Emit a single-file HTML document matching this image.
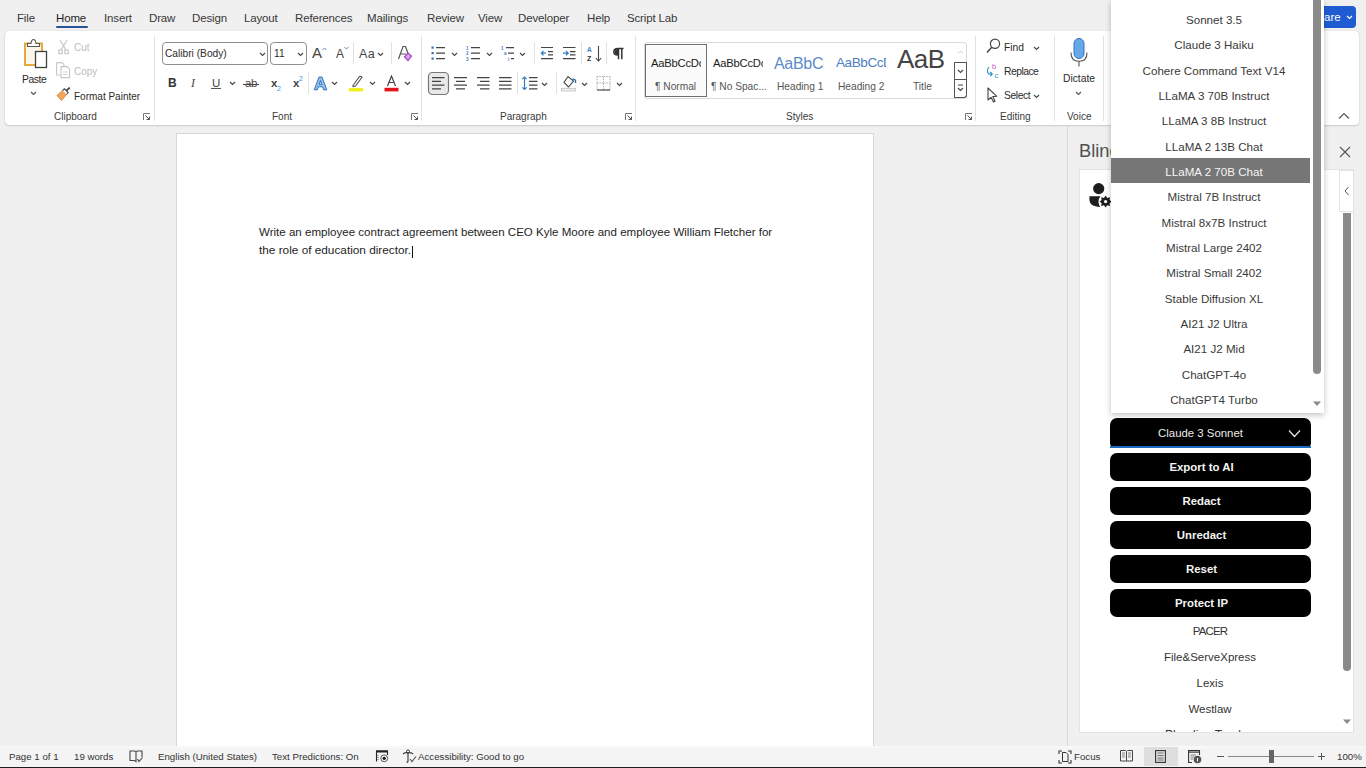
<!DOCTYPE html>
<html><head><meta charset="utf-8">
<style>
*{margin:0;padding:0;box-sizing:border-box}
html,body{width:1366px;height:768px;overflow:hidden;background:#f0f0f0;font-family:"Liberation Sans",sans-serif;color:#262626}
.a{position:absolute;white-space:nowrap}
.tab{position:absolute;top:11px;font-size:11.5px;color:#383838;line-height:14px;letter-spacing:-0.15px}
.rb{font-size:10px;color:#2b2b2b;line-height:12px}
.lbl{position:absolute;top:111px;font-size:10px;color:#3a3a3a;line-height:12px}
.sep{position:absolute;width:1px;background:#e1e1e1}
.dd{position:absolute;left:1111px;width:206px;height:25.33px;text-align:center;font-size:11.6px;line-height:25.33px;color:#3a3a3a;padding-top:1px}
.btn{position:absolute;left:1110px;width:201px;height:28px;background:#000;border-radius:7px;color:#f4f4f4;font-weight:bold;font-size:11.4px;text-align:center;line-height:28px;padding-right:18px}
.pl{position:absolute;left:1110px;width:200px;text-align:center;font-size:11.5px;color:#333;line-height:14px}
.st{position:absolute;top:751px;font-size:9.7px;color:#333;line-height:12px}
</style></head><body>

<!-- menu tabs -->
<div class="tab" style="left:17px">File</div>
<div class="tab" style="left:56px;color:#1f1f1f">Home</div>
<div class="a" style="left:56px;top:26px;width:32px;height:2px;background:#2a5298;border-radius:1px"></div>
<div class="tab" style="left:104px">Insert</div>
<div class="tab" style="left:149px">Draw</div>
<div class="tab" style="left:192px">Design</div>
<div class="tab" style="left:244px">Layout</div>
<div class="tab" style="left:295px">References</div>
<div class="tab" style="left:367px">Mailings</div>
<div class="tab" style="left:427px">Review</div>
<div class="tab" style="left:478px">View</div>
<div class="tab" style="left:518px">Developer</div>
<div class="tab" style="left:587px">Help</div>
<div class="tab" style="left:627px">Script Lab</div>

<!-- share button -->
<div class="a" style="left:1290px;top:6px;width:66px;height:22px;background:#1f5bd1;border-radius:4px"></div><div class="a" style="left:1310px;top:10px;font-size:11.5px;line-height:14px;color:#fff">Share</div><svg class="a" style="left:1346px;top:15px" width="7" height="5" viewBox="0 0 7 5"><path d="M1 1 L3.5 3.5 L6 1" fill="none" stroke="#fff" stroke-width="1.2"/></svg>

<!-- ribbon card -->
<div class="a" style="left:5px;top:31px;width:1354px;height:94px;background:#fff;border-radius:4px;box-shadow:0 0 1px rgba(0,0,0,0.22),0 1px 2px rgba(0,0,0,0.14)"></div>


<!-- ===== RIBBON CONTENT ===== -->
<!-- Clipboard -->
<svg class="a" style="left:23px;top:38px" width="26" height="31" viewBox="0 0 26 31">
 <rect x="2" y="5.5" width="17" height="21.5" fill="#fdf6ea" stroke="#e9a83b" stroke-width="2"/>
 <path d="M4.5 8.5 L4.5 5.5 L8 5.5 Q8.5 1.5 10.5 1.5 Q12.5 1.5 13 5.5 L16.5 5.5 L16.5 8.5 Z" fill="#fff" stroke="#555" stroke-width="1.1"/>
 <rect x="12.5" y="13.5" width="11" height="16" fill="#fff" stroke="#404040" stroke-width="1.3"/>
</svg>
<div class="a rb" style="left:22px;top:74px;font-size:10.3px;letter-spacing:-0.4px">Paste</div>
<svg class="a" style="left:30px;top:91px" width="7" height="5" viewBox="0 0 7 5"><path d="M1 1 L3.5 3.5 L6 1" fill="none" stroke="#555" stroke-width="1.1"/></svg>

<svg class="a" style="left:58px;top:39px" width="11" height="16" viewBox="0 0 11 16">
 <path d="M2 1 L8 11 M9 1 L3 11" stroke="#c4c4c4" stroke-width="1.1" fill="none"/>
 <rect x="0.8" y="11" width="3.4" height="3.6" fill="none" stroke="#c4c4c4" stroke-width="1.1"/>
 <rect x="6.8" y="11" width="3.4" height="3.6" fill="none" stroke="#c4c4c4" stroke-width="1.1"/>
</svg>
<div class="a rb" style="left:74px;top:42px;color:#bdbdbd">Cut</div>
<svg class="a" style="left:56px;top:62px" width="15" height="17" viewBox="0 0 15 17">
 <path d="M0.6 0.6 H6 L8 2.6 V4 M0.6 0.6 V13 H4.5" fill="none" stroke="#c6c6c6" stroke-width="1.1"/>
 <path d="M5 4.6 H11 L13.6 7.2 V15.6 H5 Z" fill="none" stroke="#c6c6c6" stroke-width="1.1"/>
 <path d="M7 10 H11.5 M7 12.5 H11.5" stroke="#d0d0d0" stroke-width="1"/>
</svg>
<div class="a rb" style="left:74px;top:66px;color:#bdbdbd">Copy</div>
<svg class="a" style="left:56px;top:87px" width="15" height="15" viewBox="0 0 15 15">
 <path d="M1 8.5 L6.5 3.5 L10.5 7.5 L5.5 13.5 Z" fill="#f2a65a" stroke="#d9782a" stroke-width="0.8"/>
 <path d="M6.5 3.5 L8.5 1.8 L12.2 5.5 L10.5 7.5" fill="#fff" stroke="#444" stroke-width="1.1"/>
 <path d="M10.4 3.6 L13.8 0.6" stroke="#444" stroke-width="1.8"/>
</svg>
<div class="a rb" style="left:74px;top:91px">Format Painter</div>
<div class="lbl" style="left:54px">Clipboard</div>
<svg class="a" style="left:143px;top:113px" width="8" height="8" viewBox="0 0 8 8"><path d="M0.5 7 V0.5 H7" fill="none" stroke="#777" stroke-width="1"/><path d="M2.5 2.5 L6.5 6.5 M3.5 6.5 H6.5 V3.5" fill="none" stroke="#555" stroke-width="1"/></svg>
<div class="sep" style="left:154px;top:36px;height:85px"></div>

<!-- Font -->
<div class="a" style="left:162px;top:42px;width:106px;height:23px;border:1px solid #8f8f8f;border-radius:4px"></div>
<div class="a rb" style="left:165px;top:48px;font-size:10.2px">Calibri (Body)</div>
<svg class="a" style="left:259px;top:52px" width="7" height="5" viewBox="0 0 7 5"><path d="M1 1 L3.5 3.5 L6 1" fill="none" stroke="#444" stroke-width="1.1"/></svg>
<div class="a" style="left:270px;top:42px;width:37px;height:23px;border:1px solid #8f8f8f;border-radius:4px"></div>
<div class="a rb" style="left:274px;top:48px;font-size:10.2px">11</div>
<svg class="a" style="left:297px;top:52px" width="7" height="5" viewBox="0 0 7 5"><path d="M1 1 L3.5 3.5 L6 1" fill="none" stroke="#444" stroke-width="1.1"/></svg>
<div class="a" style="left:312px;top:45px;font-size:15px;color:#444;line-height:16px">A</div>
<svg class="a" style="left:322px;top:47px" width="5" height="4" viewBox="0 0 5 4"><path d="M0.5 3 L2.5 1 L4.5 3" fill="none" stroke="#5a8ac0" stroke-width="1"/></svg>
<div class="a" style="left:336px;top:48px;font-size:12px;color:#444;line-height:13px">A</div>
<svg class="a" style="left:344px;top:46px" width="5" height="4" viewBox="0 0 5 4"><path d="M0.5 1 L2.5 3 L4.5 1" fill="none" stroke="#5a8ac0" stroke-width="1"/></svg>
<div class="sep" style="left:353px;top:42px;height:22px"></div>
<div class="a" style="left:359px;top:48px;font-size:12.5px;color:#444;line-height:13px;letter-spacing:0.3px">Aa</div>
<svg class="a" style="left:377px;top:52px" width="7" height="5" viewBox="0 0 7 5"><path d="M1 1 L3.5 3.5 L6 1" fill="none" stroke="#444" stroke-width="1.1"/></svg>
<div class="sep" style="left:391px;top:42px;height:22px"></div>
<svg class="a" style="left:397px;top:45px" width="16" height="17" viewBox="0 0 16 17">
 <path d="M1.5 14 L6 1.5 L8.5 1.5 L11 8.5 M4 9 H9" fill="none" stroke="#555" stroke-width="1.2"/>
 <path d="M7.5 12 L11 8 L14.5 11 L11 15.5 Z" fill="#d9a7e8" stroke="#a346c7" stroke-width="1.2"/>
</svg>

<div class="a" style="left:168px;top:77px;font-size:12px;font-weight:bold;color:#333;line-height:13px">B</div>
<div class="a" style="left:191px;top:77px;font-size:12px;font-style:italic;color:#444;line-height:13px;font-family:'Liberation Serif',serif">I</div>
<div class="a" style="left:212px;top:77px;font-size:11.5px;color:#444;line-height:13px">U</div>
<div class="a" style="left:211px;top:88px;width:10px;height:1px;background:#555"></div>
<svg class="a" style="left:229px;top:81px" width="7" height="5" viewBox="0 0 7 5"><path d="M1 1 L3.5 3.5 L6 1" fill="none" stroke="#444" stroke-width="1.1"/></svg>
<div class="a" style="left:245px;top:77px;font-size:11.5px;color:#444;line-height:13px;letter-spacing:-0.5px">ab</div>
<div class="a" style="left:243px;top:84px;width:16px;height:1px;background:#444"></div>
<div class="a" style="left:271px;top:77px;font-size:11.5px;font-weight:bold;color:#444;line-height:13px">x</div>
<div class="a" style="left:277px;top:85px;font-size:7px;color:#4d8bd0;line-height:8px">2</div>
<div class="a" style="left:293px;top:77px;font-size:11.5px;font-weight:bold;color:#444;line-height:13px">x</div>
<div class="a" style="left:299px;top:75px;font-size:7px;color:#4d8bd0;line-height:8px">2</div>
<div class="sep" style="left:308px;top:72px;height:22px"></div>
<svg class="a" style="left:313px;top:76px" width="15" height="15" viewBox="0 0 15 15">
 <path d="M1.2 13.8 L6 1 L9 1 L13.8 13.8 H10.6 L9.6 10.8 H5.4 L4.4 13.8 Z M6.3 8.3 H8.7 L7.5 4.6 Z" fill="#8cc0ee" stroke="#2a68b0" stroke-width="0.9" fill-rule="evenodd"/>
</svg>
<svg class="a" style="left:331px;top:81px" width="7" height="5" viewBox="0 0 7 5"><path d="M1 1 L3.5 3.5 L6 1" fill="none" stroke="#444" stroke-width="1.1"/></svg>
<svg class="a" style="left:348px;top:75px" width="16" height="17" viewBox="0 0 16 17">
 <path d="M5 10.5 L11.5 1.5 Q13 1 14 2.3 L7.5 11 L5 11.5 Z" fill="#fff" stroke="#555" stroke-width="1.1"/>
 <rect x="1" y="13" width="14" height="3.5" fill="#f0ef1e"/>
</svg>
<svg class="a" style="left:369px;top:81px" width="7" height="5" viewBox="0 0 7 5"><path d="M1 1 L3.5 3.5 L6 1" fill="none" stroke="#444" stroke-width="1.1"/></svg>
<svg class="a" style="left:384px;top:75px" width="15" height="17" viewBox="0 0 15 17">
 <path d="M3.5 11 L7.5 1 L11.5 11 M5 7.5 H10" fill="none" stroke="#444" stroke-width="1.2"/>
 <rect x="0.5" y="12.8" width="14" height="3.6" fill="#e3131a"/>
</svg>
<svg class="a" style="left:404px;top:81px" width="7" height="5" viewBox="0 0 7 5"><path d="M1 1 L3.5 3.5 L6 1" fill="none" stroke="#444" stroke-width="1.1"/></svg>
<div class="lbl" style="left:272px">Font</div>
<svg class="a" style="left:411px;top:113px" width="8" height="8" viewBox="0 0 8 8"><path d="M0.5 7 V0.5 H7" fill="none" stroke="#777" stroke-width="1"/><path d="M2.5 2.5 L6.5 6.5 M3.5 6.5 H6.5 V3.5" fill="none" stroke="#555" stroke-width="1"/></svg>
<div class="sep" style="left:421px;top:36px;height:85px"></div>


<!-- Paragraph -->
<svg class="a" style="left:425px;top:38px" width="215" height="60" viewBox="425 38 215 60">
 <g fill="#2f6fb5">
  <rect x="431.5" y="46.5" width="2.2" height="2.2"/><rect x="431.5" y="52" width="2.2" height="2.2"/><rect x="431.5" y="57.5" width="2.2" height="2.2"/>
 </g>
 <path d="M436 47.6 H445 M436 53.1 H445 M436 58.6 H445" stroke="#444" stroke-width="1.2"/>
 <g fill="#3b82c8" font-family="Liberation Sans" font-size="4.5" font-weight="bold"><text x="466" y="49.5">1</text><text x="466" y="55">2</text><text x="466" y="60.5">3</text></g>
 <path d="M471 47.6 H480 M471 53.1 H480 M471 58.6 H480" stroke="#444" stroke-width="1.2"/>
 <g fill="#3b82c8" font-family="Liberation Sans" font-size="4.5" font-weight="bold"><text x="501" y="49.5">1</text><text x="504" y="55">a</text><text x="508" y="60.5">i</text></g>
 <path d="M506 47.6 H514 M508 53.1 H514 M511 58.6 H514" stroke="#444" stroke-width="1.2"/>
 <path d="M541 47.5 H553 M548 51.6 H553 M548 54.8 H553 M541 58.7 H553" stroke="#444" stroke-width="1.2"/>
 <path d="M546 53.2 H541.5 M543.5 51 L541.3 53.2 L543.5 55.4" stroke="#2f7fc8" stroke-width="1.2" fill="none"/>
 <path d="M563 47.5 H575.5 M570 51.6 H575.5 M570 54.8 H575.5 M563 58.7 H575.5" stroke="#444" stroke-width="1.2"/>
 <path d="M563 53.2 H568 M566 51 L568.2 53.2 L566 55.4" stroke="#2f7fc8" stroke-width="1.2" fill="none"/>
 <text x="587" y="51.5" font-family="Liberation Sans" font-size="6.5" font-weight="bold" fill="#3b82c8">A</text>
 <text x="587" y="61" font-family="Liberation Sans" font-size="7" font-weight="bold" fill="#333">Z</text>
 <path d="M598.5 46 V61 M595.8 58 L598.5 61 L601.2 58" stroke="#444" stroke-width="1.1" fill="none"/>
 <path d="M618.5 48.5 V59.2 M621.8 48.5 V59.2 M623.5 48.5 H618 Q613.8 48.5 613.8 51.8 Q613.8 55 618 55" stroke="#333" stroke-width="1.5" fill="none"/>
 <path d="M618 49 Q614.5 49 614.5 51.8 Q614.5 54.6 618 54.6 Z" fill="#333"/>
 <rect x="428.5" y="72.5" width="20" height="22" rx="4" fill="#e9e9e9" stroke="#777" stroke-width="1.2"/>
 <path d="M432 77.6 H444.5 M432 81.4 H441 M432 85.1 H444.5 M432 88.8 H441" stroke="#444" stroke-width="1.2"/>
 <path d="M454 77.6 H467 M456 81.4 H465 M454 85.1 H467 M456 88.8 H465" stroke="#444" stroke-width="1.2"/>
 <path d="M477 77.6 H489.5 M480 81.4 H489.5 M477 85.1 H489.5 M480 88.8 H489.5" stroke="#444" stroke-width="1.2"/>
 <path d="M499 77.6 H511.5 M499 81.4 H511.5 M499 85.1 H511.5 M499 88.8 H511.5" stroke="#444" stroke-width="1.2"/>
 <path d="M524.5 77 V89.5 M522.3 79.2 L524.5 77 L526.7 79.2 M522.3 87.3 L524.5 89.5 L526.7 87.3" stroke="#2f7fc8" stroke-width="1.2" fill="none"/>
 <path d="M529 77.6 H537.5 M529 81.4 H537.5 M529 85.1 H537.5 M529 88.8 H537.5" stroke="#444" stroke-width="1.2"/>
 <path d="M568 76.5 L564 82.5 L568.5 87 L573.5 81 Z" fill="#fff" stroke="#444" stroke-width="1.1"/>
 <path d="M572 80 Q574 78 575.5 80.5 V83" stroke="#2f6fb5" stroke-width="1.4" fill="none"/>
 <rect x="561.5" y="88.3" width="14" height="2.6" fill="#f2f2f2" stroke="#bbb" stroke-width="0.8"/>
 <path d="M597 76.5 H610 M597 83 H610 M597 76.5 V90 M610 76.5 V90 M603.5 76.5 V90" stroke="#999" stroke-width="0.9" stroke-dasharray="1.2 1.2" fill="none"/>
 <path d="M597 90 H610" stroke="#444" stroke-width="1.2"/>
</svg>
<svg class="a" style="left:451px;top:52px" width="7" height="5" viewBox="0 0 7 5"><path d="M1 1 L3.5 3.5 L6 1" fill="none" stroke="#444" stroke-width="1.1"/></svg><svg class="a" style="left:486px;top:52px" width="7" height="5" viewBox="0 0 7 5"><path d="M1 1 L3.5 3.5 L6 1" fill="none" stroke="#444" stroke-width="1.1"/></svg><svg class="a" style="left:519px;top:52px" width="7" height="5" viewBox="0 0 7 5"><path d="M1 1 L3.5 3.5 L6 1" fill="none" stroke="#444" stroke-width="1.1"/></svg>
<svg class="a" style="left:541px;top:82px" width="7" height="5" viewBox="0 0 7 5"><path d="M1 1 L3.5 3.5 L6 1" fill="none" stroke="#444" stroke-width="1.1"/></svg><svg class="a" style="left:581px;top:82px" width="7" height="5" viewBox="0 0 7 5"><path d="M1 1 L3.5 3.5 L6 1" fill="none" stroke="#444" stroke-width="1.1"/></svg><svg class="a" style="left:616px;top:82px" width="7" height="5" viewBox="0 0 7 5"><path d="M1 1 L3.5 3.5 L6 1" fill="none" stroke="#444" stroke-width="1.1"/></svg>
<div class="sep" style="left:534px;top:42px;height:22px"></div>
<div class="sep" style="left:581px;top:42px;height:22px"></div>
<div class="sep" style="left:606px;top:42px;height:22px"></div>
<div class="sep" style="left:517px;top:72px;height:22px"></div>
<div class="sep" style="left:556px;top:72px;height:22px"></div>
<div class="lbl" style="left:500px">Paragraph</div>
<svg class="a" style="left:625px;top:113px" width="8" height="8" viewBox="0 0 8 8"><path d="M0.5 7 V0.5 H7" fill="none" stroke="#777" stroke-width="1"/><path d="M2.5 2.5 L6.5 6.5 M3.5 6.5 H6.5 V3.5" fill="none" stroke="#555" stroke-width="1"/></svg>
<div class="sep" style="left:635px;top:36px;height:85px"></div>

<!-- Styles -->
<div class="a" style="left:644px;top:42px;width:323px;height:57px;border:1px solid #d9d9d9;border-radius:3px"></div>
<div class="a" style="left:645px;top:44px;width:62px;height:53px;border:1.5px solid #6f6f6f;background:#fbfbfb"></div>
<div class="a" style="left:651px;top:57px;width:50px;overflow:hidden;font-size:11.2px;color:#1a1a1a;line-height:13px;letter-spacing:-0.2px">AaBbCcDc</div>
<div class="a" style="left:655px;top:81px;font-size:10.2px;color:#555;line-height:12px">&#182; Normal</div>
<div class="a" style="left:713px;top:57px;width:50px;overflow:hidden;font-size:11.2px;color:#1a1a1a;line-height:13px;letter-spacing:-0.2px">AaBbCcDc</div>
<div class="a" style="left:711px;top:81px;font-size:10.2px;color:#555;line-height:12px">&#182; No Spac...</div>
<div class="a" style="left:774px;top:54px;width:50px;overflow:hidden;font-size:16px;color:#5b8bc8;line-height:19px;letter-spacing:-0.3px">AaBbCc</div>
<div class="a" style="left:777px;top:81px;font-size:10.2px;color:#555;line-height:12px">Heading 1</div>
<div class="a" style="left:836px;top:55px;width:50px;overflow:hidden;font-size:13.5px;color:#4d7fbf;line-height:15px;letter-spacing:-0.4px">AaBbCcD</div>
<div class="a" style="left:838px;top:81px;font-size:10.2px;color:#555;line-height:12px">Heading 2</div>
<div class="a" style="left:897px;top:45px;font-size:26px;color:#444;line-height:28px;letter-spacing:-0.5px">AaB</div>
<div class="a" style="left:913px;top:81px;font-size:10.2px;color:#555;line-height:12px">Title</div>
<div class="a" style="left:954px;top:62px;width:13px;height:18px;border:1px solid #555;border-radius:0"></div>
<div class="a" style="left:954px;top:79px;width:13px;height:19px;border:1px solid #555;border-top:none;border-radius:0 0 3px 0"></div>
<svg class="a" style="left:957px;top:50px" width="7" height="5" viewBox="0 0 7 5"><path d="M1 3.5 L3.5 1 L6 3.5" fill="none" stroke="#ccc" stroke-width="1"/></svg>
<svg class="a" style="left:957px;top:69px" width="7" height="5" viewBox="0 0 7 5"><path d="M1 1 L3.5 3.5 L6 1" fill="none" stroke="#444" stroke-width="1.1"/></svg>
<svg class="a" style="left:957px;top:84px" width="7" height="9" viewBox="0 0 7 9"><path d="M1 1 H6 M1 4 L3.5 6.5 L6 4" fill="none" stroke="#444" stroke-width="1.1"/></svg>
<div class="lbl" style="left:786px">Styles</div>
<svg class="a" style="left:965px;top:113px" width="8" height="8" viewBox="0 0 8 8"><path d="M0.5 7 V0.5 H7" fill="none" stroke="#777" stroke-width="1"/><path d="M2.5 2.5 L6.5 6.5 M3.5 6.5 H6.5 V3.5" fill="none" stroke="#555" stroke-width="1"/></svg>
<div class="sep" style="left:975px;top:36px;height:85px"></div>

<!-- Editing -->
<svg class="a" style="left:986px;top:38px" width="15" height="16" viewBox="0 0 15 16"><circle cx="9" cy="5.8" r="4.6" fill="none" stroke="#444" stroke-width="1.2"/><path d="M5.7 9.3 L1 14.5" stroke="#444" stroke-width="1.4"/></svg>
<div class="a rb" style="left:1004px;top:42px;font-size:10.3px">Find</div>
<svg class="a" style="left:1033px;top:46px" width="7" height="5" viewBox="0 0 7 5"><path d="M1 1 L3.5 3.5 L6 1" fill="none" stroke="#444" stroke-width="1.1"/></svg>
<svg class="a" style="left:985px;top:62px" width="16" height="17" viewBox="0 0 16 17">
 <text x="7" y="7" font-family="Liberation Sans" font-size="7.5" fill="#c05fc2">b</text>
 <text x="9.5" y="15.5" font-family="Liberation Sans" font-size="7.5" fill="#2d8fc9">c</text>
 <path d="M4 5 Q1.2 8.5 3.5 12 L7 12 M5.3 10 L7.3 12 L5.3 14" fill="none" stroke="#2d8fc9" stroke-width="1.1"/>
</svg>
<div class="a rb" style="left:1004px;top:66px;font-size:10.3px;letter-spacing:-0.5px">Replace</div>
<svg class="a" style="left:987px;top:87px" width="11" height="16" viewBox="0 0 11 16"><path d="M1 1 L1 13 L4 10.3 L6.5 15 L8 14.2 L5.8 9.6 L9.8 9.3 Z" fill="#fff" stroke="#444" stroke-width="1.1" stroke-linejoin="round"/></svg>
<div class="a rb" style="left:1004px;top:90px;font-size:10.3px;letter-spacing:-0.4px">Select</div>
<svg class="a" style="left:1033px;top:94px" width="7" height="5" viewBox="0 0 7 5"><path d="M1 1 L3.5 3.5 L6 1" fill="none" stroke="#444" stroke-width="1.1"/></svg>
<div class="lbl" style="left:1000px">Editing</div>
<div class="sep" style="left:1054px;top:36px;height:85px"></div>

<!-- Voice -->
<svg class="a" style="left:1068px;top:37px" width="22" height="31" viewBox="0 0 22 31">
 <rect x="6" y="1.5" width="10" height="20" rx="5" fill="#65a9ea" stroke="#3470b5" stroke-width="1"/>
 <path d="M3 15.5 Q3 24.3 11 24.3 Q19 24.3 19 15.5 M11 24.3 V29.5" fill="none" stroke="#505050" stroke-width="1.1"/>
</svg>
<div class="a rb" style="left:1063px;top:73px;font-size:10.3px">Dictate</div>
<svg class="a" style="left:1075px;top:91px" width="7" height="5" viewBox="0 0 7 5"><path d="M1 1 L3.5 3.5 L6 1" fill="none" stroke="#555" stroke-width="1.1"/></svg>
<div class="lbl" style="left:1067px">Voice</div>
<div class="sep" style="left:1103px;top:36px;height:85px"></div>

<svg class="a" style="left:1338px;top:112px" width="12" height="8" viewBox="0 0 12 8"><path d="M1 6.5 L6 1.5 L11 6.5" fill="none" stroke="#555" stroke-width="1.1"/></svg>
<!-- page -->
<div class="a" style="left:176px;top:133px;width:698px;height:640px;background:#fff;border:1px solid #d6d6d6"></div>
<div class="a" style="left:259px;top:224px;font-size:11.55px;line-height:17.7px;color:#1e1e1e">Write an employee contract agreement between CEO Kyle Moore and employee William Fletcher for</div>
<div class="a" style="left:259px;top:241.7px;font-size:11.8px;line-height:17.7px;color:#1e1e1e">the role of education director.</div>
<div class="a" style="left:412px;top:246px;width:1px;height:12px;background:#111"></div>

<!-- task pane -->
<div class="a" style="left:1067px;top:126px;width:1px;height:621px;background:#dadada"></div>
<div class="a" style="left:1079px;top:140px;font-size:18.3px;line-height:21px;color:#505050">Blind</div>
<div class="a" style="left:1079px;top:169px;width:275px;height:564px;background:#fff;border:1px solid #e3e3e3"></div>

<!-- buttons -->
<div class="btn" style="top:418px;font-weight:normal;color:#eaeaea;border-radius:7px 7px 4px 4px;height:29px;line-height:30px;padding-right:20px">Claude 3 Sonnet</div>
<div class="a" style="left:1110px;top:446px;width:201px;height:2px;background:#1a6bc4"></div>
<svg class="a" style="left:1288px;top:429px" width="13" height="9" viewBox="0 0 13 9"><path d="M1 1.5 L6.5 7.5 L12 1.5" fill="none" stroke="#e6e6e6" stroke-width="1.2"/></svg>
<div class="btn" style="top:453px">Export to AI</div>
<div class="btn" style="top:487px">Redact</div>
<div class="btn" style="top:521px">Unredact</div>
<div class="btn" style="top:555px">Reset</div>
<div class="btn" style="top:589px">Protect IP</div>
<div class="pl" style="top:624px;letter-spacing:-0.9px">PACER</div>
<div class="pl" style="top:650px">File&amp;ServeXpress</div>
<div class="pl" style="top:676px">Lexis</div>
<div class="pl" style="top:702px">Westlaw</div>

<!-- panel scrollbar -->
<div class="a" style="left:1343px;top:213px;width:8px;height:458px;background:#8a8a8a;border-radius:0 0 4px 4px"></div>
<div class="a" style="left:1339px;top:170px;width:15px;height:42px;background:#fff;border:1px solid #e3e3e3"></div>
<svg class="a" style="left:1339px;top:146px" width="12" height="12" viewBox="0 0 12 12"><path d="M1 1 L11 11 M11 1 L1 11" stroke="#555" stroke-width="1.1"/></svg>


<svg class="a" style="left:1088px;top:182px" width="24" height="27" viewBox="1088 182 24 27">
 <circle cx="1098.7" cy="188.6" r="5.6" fill="#1e1e1e"/>
 <path d="M1089.4 196.3 H1100.5 Q1098.2 199 1098.5 202 Q1098.8 205 1100.2 206.9 Q1092.5 207 1090 202.5 Q1089.2 199.8 1089.4 196.3 Z" fill="#1e1e1e"/>
 <path d="M1105.6 195.6 L1107.2 198 L1110 197.2 L1109.6 200 L1111.6 201.6 L1109.6 203.2 L1110 206 L1107.2 205.2 L1105.6 207.6 L1104 205.2 L1101.2 206 L1101.6 203.2 L1099.6 201.6 L1101.6 200 L1101.2 197.2 L1104 198 Z" fill="#1e1e1e"/>
 <circle cx="1105.6" cy="201.6" r="1.6" fill="#fff"/>
</svg>
<svg class="a" style="left:1344px;top:186px" width="6" height="10" viewBox="0 0 6 10"><path d="M4.5 1 L1 5 L4.5 9" fill="none" stroke="#555" stroke-width="1"/></svg>
<svg class="a" style="left:1342px;top:719px" width="10" height="6" viewBox="0 0 10 6"><path d="M1 0.5 H9 L5 5 Z" fill="#8a8a8a"/></svg>
<div class="a" style="left:1080px;top:729px;width:273px;height:3px;overflow:hidden"><div style="position:absolute;left:0;top:-1.5px;width:260px;text-align:center;font-size:12px;line-height:14px;color:#333">Pleading Tracker</div></div>

<!-- dropdown -->
<div class="a" style="left:1111px;top:0;width:213px;height:413px;background:#fff;box-shadow:0 2px 6px rgba(0,0,0,0.25);overflow:hidden">
</div>
<div class="dd" style="top:6px">Sonnet 3.5</div>
<div class="dd" style="top:31.33px">Claude 3 Haiku</div>
<div class="dd" style="top:56.66px">Cohere Command Text V14</div>
<div class="dd" style="top:82px">LLaMA 3 70B Instruct</div>
<div class="dd" style="top:107.33px">LLaMA 3 8B Instruct</div>
<div class="dd" style="top:132.66px">LLaMA 2 13B Chat</div>
<div class="dd" style="top:158px;background:#767676;color:#f5f5f5;width:199px;text-indent:7px">LLaMA 2 70B Chat</div>
<div class="dd" style="top:183.33px">Mistral 7B Instruct</div>
<div class="dd" style="top:208.66px">Mistral 8x7B Instruct</div>
<div class="dd" style="top:234px">Mistral Large 2402</div>
<div class="dd" style="top:259.33px">Mistral Small 2402</div>
<div class="dd" style="top:284.66px">Stable Diffusion XL</div>
<div class="dd" style="top:310px">AI21 J2 Ultra</div>
<div class="dd" style="top:335.33px">AI21 J2 Mid</div>
<div class="dd" style="top:360.66px">ChatGPT-4o</div>
<div class="dd" style="top:386px">ChatGPT4 Turbo</div>
<div class="a" style="left:1313px;top:0;width:8px;height:374px;background:#8a8a8a;border-radius:0 0 4px 4px"></div>
<svg class="a" style="left:1312px;top:401px" width="10" height="6" viewBox="0 0 10 6"><path d="M1 0.5 H9 L5 5 Z" fill="#8a8a8a"/></svg>

<!-- status bar -->
<div class="a" style="left:0;top:746px;width:1366px;height:21px;background:#f4f4f4;border-top:2px solid #f8f8f8"></div>
<div class="a" style="left:0;top:767px;width:1366px;height:1px;background:#1c1c1c"></div>

<svg class="a" style="left:129px;top:750px" width="15" height="13" viewBox="0 0 15 13"><path d="M1 1 H5.5 Q7 1 7 2.5 V11.5 Q6 10.5 4.5 10.5 H1 Z M7 2.5 Q7 1 8.5 1 H13 V7" fill="none" stroke="#444" stroke-width="1.1"/><path d="M8.5 9 L10 11.5 L13.5 7.5" fill="none" stroke="#444" stroke-width="1.1"/></svg>
<svg class="a" style="left:375px;top:750px" width="14" height="13" viewBox="0 0 14 13"><path d="M1.5 11.5 V1 H12.5 V5" fill="none" stroke="#222" stroke-width="1.1"/><path d="M1 1.5 H13" stroke="#222" stroke-width="2"/><path d="M3 5 V10" stroke="#555" stroke-width="1" stroke-dasharray="1 1"/><circle cx="9.2" cy="8.3" r="3.4" fill="#f4f4f4" stroke="#555" stroke-width="1"/><circle cx="9.2" cy="8.3" r="1.6" fill="#111"/></svg>
<svg class="a" style="left:402px;top:749px" width="15" height="15" viewBox="0 0 15 15"><circle cx="6" cy="2.5" r="1.5" fill="none" stroke="#333" stroke-width="1"/><path d="M1 5 Q3 3 6 4 Q9 3 11 5 M6 4 V12 Q6 13.5 4.5 13" fill="none" stroke="#333" stroke-width="1.1"/><path d="M8 10 L10 12.5 L14 7.5" fill="none" stroke="#555" stroke-width="1.1"/></svg>
<svg class="a" style="left:1058px;top:750px" width="14" height="14" viewBox="0 0 14 14"><path d="M1 4 V1 H4 M10 1 H13 V4 M13 10 V13 H10 M4 13 H1 V10" fill="none" stroke="#333" stroke-width="1.1"/><path d="M4.5 2.5 H8 L10 4.5 V11.5 H4.5 Z" fill="none" stroke="#333" stroke-width="1"/></svg>
<svg class="a" style="left:1120px;top:750px" width="13" height="12" viewBox="0 0 13 12"><path d="M0.5 0.5 H5.5 L6.5 1.5 L7.5 0.5 H12.5 V11 H7.5 L6.5 11.8 L5.5 11 H0.5 Z M6.5 1.5 V11" fill="none" stroke="#444" stroke-width="1"/><path d="M2 3 H5 M2 5 H5 M2 7 H5 M8 3 H11 M8 5 H11 M8 7 H11" stroke="#777" stroke-width="0.9"/></svg>
<div class="a" style="left:1144px;top:747px;width:34px;height:19px;background:#dedede"></div>
<svg class="a" style="left:1155px;top:750px" width="11" height="13" viewBox="0 0 11 13"><rect x="0.6" y="0.6" width="9.8" height="11.8" fill="none" stroke="#333" stroke-width="1.1"/><path d="M2.5 3 H8.5 M2.5 5.5 H8.5 M2.5 8 H8.5 M2.5 10 H8.5" stroke="#555" stroke-width="0.8"/></svg>
<svg class="a" style="left:1188px;top:750px" width="14" height="14" viewBox="0 0 14 14"><path d="M4 12.5 H0.6 V0.6 H11.5 V5" fill="none" stroke="#333" stroke-width="1.1"/><path d="M0.6 2.2 H11.5" stroke="#333" stroke-width="1"/><path d="M2.5 5 H8 M2.5 7 H6 M2.5 9 H5" stroke="#777" stroke-width="0.9"/><circle cx="9.5" cy="9.5" r="3.8" fill="#555"/><path d="M9.5 8 V11.5" stroke="#fff" stroke-width="1"/></svg>
<div class="a" style="left:1217px;top:756px;width:7px;height:1px;background:#555"></div>
<div class="a" style="left:1228px;top:756px;width:86px;height:1px;background:#888"></div>
<div class="a" style="left:1269px;top:750px;width:5px;height:13px;background:#666"></div>
<div class="a" style="left:1318px;top:756px;width:7px;height:1px;background:#555"></div>
<div class="a" style="left:1321px;top:753px;width:1px;height:7px;background:#555"></div>
<div class="st" style="left:9px">Page 1 of 1</div>
<div class="st" style="left:74px">19 words</div>
<div class="st" style="left:158px">English (United States)</div>
<div class="st" style="left:272px">Text Predictions: On</div>
<div class="st" style="left:418px">Accessibility: Good to go</div>
<div class="st" style="left:1074px">Focus</div>
<div class="st" style="left:1337px">100%</div>

</body></html>
